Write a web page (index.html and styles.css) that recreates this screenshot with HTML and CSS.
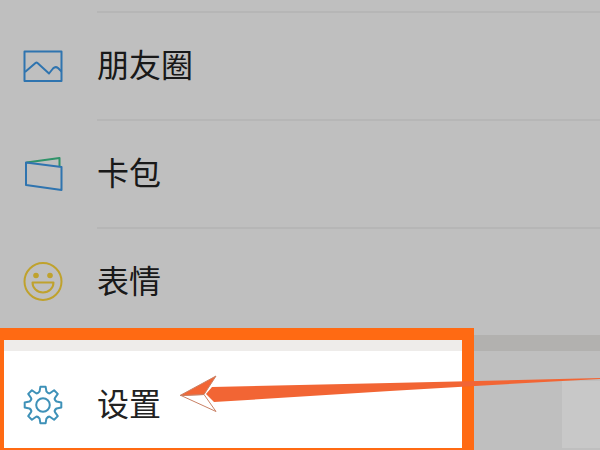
FILE: index.html
```
<!DOCTYPE html>
<html lang="zh-CN">
<head>
  <meta charset="UTF-8" />
  <meta name="viewport" content="width=device-width, initial-scale=1.0" />
  <title>设置</title>
  <link rel="stylesheet" href="styles.css">
</head>
<body>
  <main class="screen">
    <nav class="menu">
      <a class="item" href="#">
        <svg class="icon blue" viewBox="0 0 40 40" aria-hidden="true">
          <rect x="1.500" y="6.500" width="37" height="29.500" />
          <path d="M2 27 L12.500 18 Q13.500 17.200 14.500 18 L26 28.500 L30 23.500 Q32.500 21 35 23 L38.500 26.500" />
        </svg>
        <span class="label">朋友圈</span>
      </a>
      <a class="item" href="#">
        <svg class="icon blue" viewBox="0 0 40 40" aria-hidden="true">
          <path class="green" d="M3.500 9.500 L36.500 5 V13" />
          <path d="M3 9.500 L38.500 14 V37 L3 32 Z" />
        </svg>
        <span class="label">卡包</span>
      </a>
      <a class="item" href="#">
        <svg class="icon yellow" viewBox="0 0 40 40" aria-hidden="true">
          <circle cx="20" cy="20.500" r="18.500" />
          <circle class="eye" cx="13" cy="14.500" r="2.800" />
          <circle class="eye" cx="27" cy="14.500" r="2.800" />
          <path d="M9.500 21.500 H30.500 C30.500 27 26 31.500 20 31.500 S9.500 27 9.500 21.500 Z" />
        </svg>
        <span class="label">表情</span>
      </a>
    </nav>

    <nav class="menu settings">
      <a class="item" href="#">
        <svg class="icon sky" viewBox="-20 -20 40 40" aria-hidden="true">
          <path d="M-3.400 -13.600 L-2.600 -18.300 H2.600 L3.400 -13.600 Q5.600 -10.800 7.200 -12
            L11.100 -14.800 L14.800 -11.100 L12 -7.200 Q10.800 -5.600 13.600 -3.400
            L18.300 -2.600 V2.600 L13.600 3.400 Q10.800 5.600 12 7.200
            L14.800 11.100 L11.100 14.800 L7.200 12 Q5.600 10.800 3.400 13.600
            L2.600 18.300 H-2.600 L-3.400 13.600 Q-5.600 10.800 -7.200 12
            L-11.100 14.800 L-14.800 11.100 L-12 7.200 Q-10.800 5.600 -13.600 3.400
            L-18.300 2.600 V-2.600 L-13.600 -3.400 Q-10.800 -5.600 -12 -7.200
            L-14.800 -11.100 L-11.100 -14.800 L-7.200 -12 Q-5.600 -10.800 -3.400 -13.600 Z" />
          <circle r="6.800" />
        </svg>
        <span class="label">设置</span>
      </a>
      <div class="spotlight"></div>
      <div class="patch"></div>
      <svg class="arrow" viewBox="0 0 420 40" preserveAspectRatio="none" aria-hidden="true">
        <path class="shaft" d="M32 13 L210 9 L420 4 V5 L382 7 L295 12 L210 17 L34 28 L26 20 Z" />
        <path class="head-bottom" d="M1 21.500 L24 20.500 L36 37.500 Z" />
        <path class="head-top" d="M0 21.500 L36 2 L24 20.500 Z" />
      </svg>
    </nav>
  </main>
</body>
</html>
```
FILE: styles.css
```
:root {
  --frame: #ff6a13;
  --arrow: #f26534;
  --line: #eeecea;
}

body {
  margin: 0;
  font-family: "Noto Sans CJK SC", sans-serif;
  background: #ffffff;
  color: #222222;
}

.screen {
  height: 100vh;
  padding-top: 11px;
  box-sizing: border-box;
  overflow: hidden;
}

/* MENU */
.item {
  display: flex;
  align-items: center;
  height: 108px;
  padding-left: 23px;
  gap: 34px;
  color: inherit;
  text-decoration: none;
}

.label {
  flex: 1;
  display: flex;
  align-items: center;
  height: 100%;
  padding-bottom: 6px;
  box-sizing: border-box;
  border-top: 2px solid #f3f3f3;
  font-size: 32px;
  line-height: 48px;
}

.settings {
  position: relative;
  border-top: 16px solid var(--line);
}

.settings .label {
  border-top: none;
}

/* ICONS */
.icon {
  width: 40px;
  height: 40px;
  fill: none;
  stroke-width: 2;
  stroke-linejoin: round;
}

.blue {
  stroke: #3f9bea;
}

.green {
  stroke: #3fc48c;
}

.yellow {
  stroke: #ffd83c;
}

.eye {
  fill: #ffd83c;
  stroke: none;
}

.sky {
  stroke: #3e91b8;
}

/* HIGHLIGHT */
.spotlight {
  position: absolute;
  top: -23px;
  left: 0;
  width: 79%;
  height: 132px;
  box-sizing: border-box;
  border: 12px solid var(--frame);
  border-left-width: 4px;
  box-shadow: 0 0 0 1000px rgba(0, 0, 0, 0.25);
  pointer-events: none;
}

.patch {
  position: absolute;
  top: 30px;
  right: 0;
  width: 38px;
  height: 67px;
  background: #c8c8c8;
}

.arrow {
  position: absolute;
  top: 23px;
  left: 30%;
  width: 70%;
  height: 40px;
  pointer-events: none;
}

.shaft,
.head-top {
  fill: var(--arrow);
}

.head-top,
.head-bottom {
  stroke: #c98165;
  stroke-width: 1;
}

.head-bottom {
  fill: #ffffff;
}
```
